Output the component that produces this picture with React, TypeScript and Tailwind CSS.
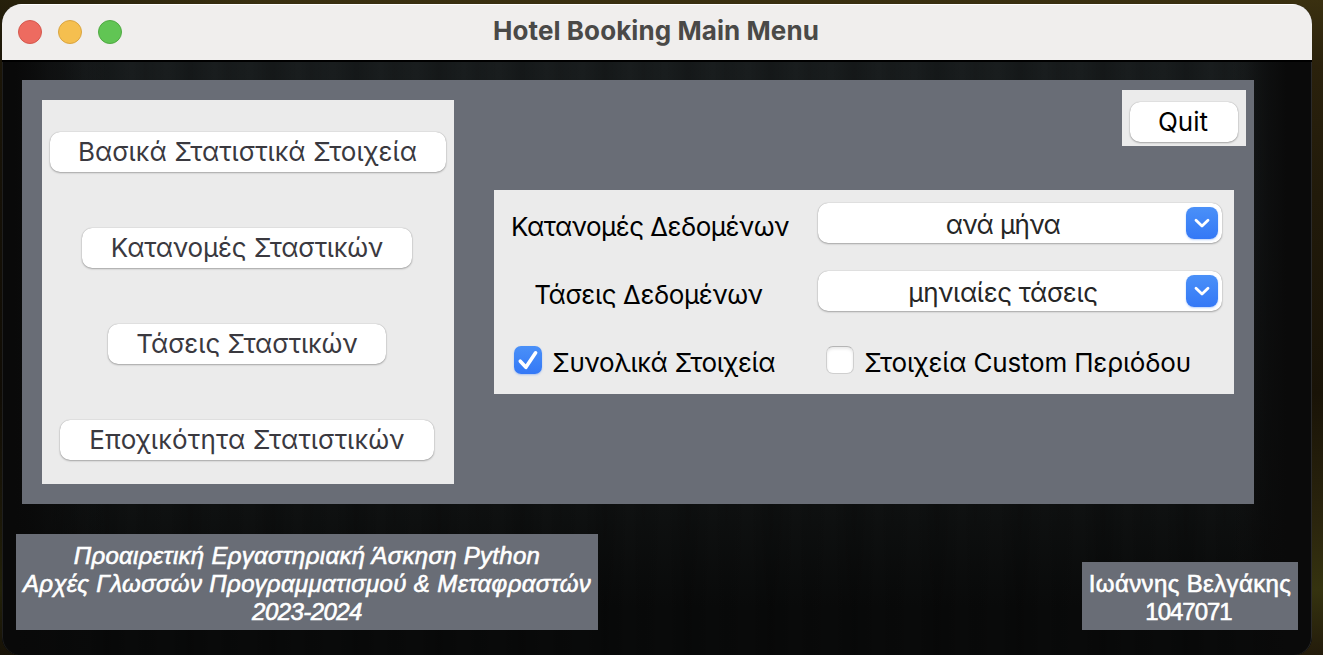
import React from "react";

const raised =
  "bg-white rounded-[10px] shadow-[0_0_1px_rgba(0,0,0,0.35),0_1px_2px_rgba(0,0,0,0.28)]";

function MenuButton({ className, label, spacing }: { className: string; label: string; spacing: string }) {
  return (
    <button className={`${raised} flex h-10 items-center justify-center text-[#3a393f] ${className}`}>
      <span className={spacing}>{label}</span>
    </button>
  );
}

function Select({ value, spacing }: { value: string; spacing: string }) {
  return (
    <div className={`${raised} flex h-10 w-[404px] items-center pr-1`}>
      <span className={`flex-1 pt-[3px] text-center text-[#262626] ${spacing}`}>{value}</span>
      <span className="flex h-8 w-8 items-center justify-center rounded-[8px] bg-linear-to-b from-[#4a90f8] to-[#3478f6] shadow-[0_1px_2px_rgba(52,120,246,0.35)]">
        <svg width="16" height="10" viewBox="0 0 16 10" fill="none" stroke="white" strokeWidth="2.8" strokeLinecap="round" strokeLinejoin="round">
          <path d="M2 2.2 8 8l6-5.8" />
        </svg>
      </span>
    </div>
  );
}

export default function App() {
  return (
    <div className="h-[655px] w-[1323px] overflow-hidden bg-[linear-gradient(90deg,rgba(0,0,0,0.35)_0%,transparent_20%),linear-gradient(180deg,#3a3010_0%,#2a210c_10%,#211a0a_30%,#191307_60%,#2b250d_80%,#35330f_90%,#231b0b_100%)] pl-[2px] pt-1 font-['Inter','Liberation_Sans',sans-serif] text-[26px] leading-8 whitespace-nowrap">
      <div className="flex h-[651px] w-[1310px] flex-col overflow-hidden rounded-t-[20px] rounded-b-[18px] bg-[#0a0b0b]">
        <header className="grid h-14 grid-cols-[1fr_auto_1fr] items-center bg-[#f0eeed] shadow-[inset_0_1px_0_#fff]">
          <div className="flex gap-4 pl-4">
            <span className="h-6 w-6 rounded-full border border-[#d4584e] bg-[#ed6b60]" />
            <span className="h-6 w-6 rounded-full border border-[#d9a441] bg-[#f5bf4f]" />
            <span className="h-6 w-6 rounded-full border border-[#50a943] bg-[#61c554]" />
          </div>
          <h1 className="pb-[2px] pr-[2px] font-bold tracking-[0.08px] text-[#4a4947]">Hotel Booking Main Menu</h1>
          <div />
        </header>

        <main className="flex flex-1 flex-col rounded-b-[18px] border-t-2 border-black bg-[linear-gradient(90deg,#090909_0%,#090909_1%,transparent_8%,transparent_94%,#0a0a0a_98%),repeating-linear-gradient(90deg,transparent_0px,rgba(0,0,0,0.18)_22px,transparent_47px,rgba(0,0,0,0.1)_60px,transparent_83px),linear-gradient(180deg,#191d1e_0%,#171b1c_25%,#0f1111_75%,#090a0a_92%)] pt-[18px] shadow-[inset_-1px_0_0_#2a2a2a,inset_1px_0_0_#1f1f1f]">
          <section className="ml-5 flex h-[424px] w-[1232px] bg-[#696d76] pl-5 pt-5">
            <nav className="flex h-96 w-[412px] flex-col items-center gap-14 bg-[#ebebeb] pt-8">
              <MenuButton className="w-[396px] pr-px" label="Βασικά Στατιστικά Στοιχεία" spacing="tracking-[0.03px]" />
              <MenuButton className="mr-[2px] w-[330px]" label="Κατανομές Σταστικών" spacing="tracking-[-0.15px]" />
              <MenuButton className="mr-[2px] w-[278px]" label="Τάσεις Σταστικών" spacing="tracking-[-0.06px]" />
              <MenuButton className="mr-[2px] w-[374px]" label="Εποχικότητα Στατιστικών" spacing="tracking-[0.17px]" />
            </nav>

            <div className="-mt-[10px] ml-10 flex flex-col">
              <div className="ml-[628px] h-14 w-[124px] bg-[#ebebeb] pl-2 pt-3">
                <button className={`${raised} flex h-10 w-[108px] items-center justify-center pb-px pr-[2px] text-black`}>
                  Quit
                </button>
              </div>

              <form className="mt-11 h-[204px] w-[740px] bg-[#ebebeb] pt-[13px] text-black">
                <div className="flex h-[68px]">
                  <div className="w-[324px] pt-2 pr-[12px] text-center tracking-[-0.5px]">Κατανομές Δεδομένων</div>
                  <Select value="ανά μήνα" spacing="pl-[2px] tracking-[-0.6px]" />
                </div>
                <div className="flex h-[68px]">
                  <div className="w-[324px] pt-2 pr-[15px] text-center tracking-[-0.38px]">Τάσεις Δεδομένων</div>
                  <Select value="μηνιαίες τάσεις" spacing="pl-[2px] tracking-[-0.35px]" />
                </div>
                <div className="flex pl-5 pt-[3px]">
                  <label className="flex w-[312px]">
                    <span className="mt-1 flex h-7 w-7 items-center justify-center rounded-[7px] bg-linear-to-b from-[#4a90f8] to-[#3478f6] shadow-[0_1px_2px_rgba(52,120,246,0.35)]">
                      <svg width="28" height="28" viewBox="0 0 28 28" fill="none" stroke="white" strokeWidth="3.6" strokeLinecap="round" strokeLinejoin="round">
                        <path d="M6.3 15.2 11.9 21.3 21.6 6.8" />
                      </svg>
                    </span>
                    <span className="ml-[10px] mt-[5px] tracking-[-0.37px]">Συνολικά Στοιχεία</span>
                  </label>
                  <label className="flex">
                    <span className="mt-1 h-7 w-7 rounded-[7px] border border-[#cfcfcf] border-t-[#b5b5b5] bg-white shadow-[inset_0_2px_3px_rgba(0,0,0,0.09)]" />
                    <span className="ml-[10px] mt-[5px] tracking-[-0.18px]">Στοιχεία Custom Περιόδου</span>
                  </label>
                </div>
              </form>
            </div>
          </section>

          <footer className="mt-[30px] flex items-end justify-between pl-[14px] pr-[14px] text-center font-['Liberation_Sans',sans-serif] text-[24px] leading-7 text-white [-webkit-text-stroke:0.6px_white]">
            <div className="h-24 w-[582px] bg-[#696d76] pt-2 italic">
              <p className="tracking-[0.3px]">Προαιρετική Εργαστηριακή Άσκηση Python</p>
              <p className="tracking-[0.37px]">Αρχές Γλωσσών Προγραμματισμού &amp; Μεταφραστών</p>
              <p className="tracking-[-0.55px]">2023-2024</p>
            </div>
            <div className="h-[68px] w-[216px] bg-[#696d76] pt-2">
              <p className="tracking-[0.38px]">Ιωάννης Βελγάκης</p>
              <p className="pr-[3px] tracking-[-1px]">1047071</p>
            </div>
          </footer>
        </main>
      </div>
    </div>
  );
}
